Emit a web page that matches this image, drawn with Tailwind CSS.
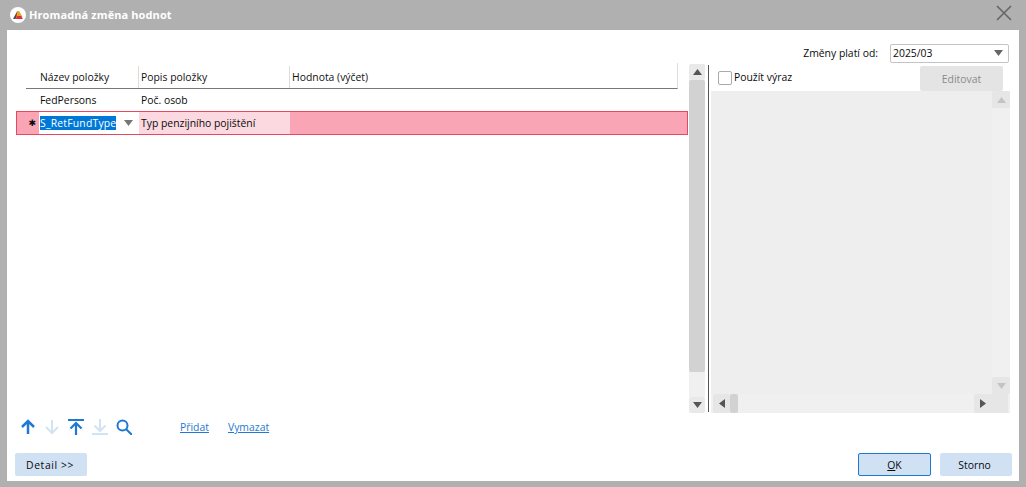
<!DOCTYPE html>
<html><head><meta charset="utf-8"><script src="https://cdn.jsdelivr.net/npm/@tailwindcss/browser@4"></script></head>
<body class="m-0 w-[1026px] h-[487px] overflow-hidden bg-[#b0b0b0] font-['Open_Sans',sans-serif] text-[10.4px] text-[#0a0a0a]">
<div class="h-[30px] flex items-center pl-[10px] pr-[14px] justify-between">
  <div class="flex items-center gap-[3px]">
    <svg width="16" height="16" viewBox="0 0 16 16"><circle cx="8" cy="8" r="8" fill="#fff"/><path d="M3 12 L7 4.500 L9 4.500 L7 9 L5.500 12Z" fill="#4a4a4a"/><path d="M7 4.500 L9.500 4.500 L12.500 10 L6.500 10Z" fill="#f0a020"/><path d="M5.500 12 L7 9 L11 9 L13 12Z" fill="#dd2f3c"/></svg>
    <span class="text-white font-bold text-[11px] tracking-[0.1px]">Hromadná změna hodnot</span>
  </div>
  <svg width="16" height="16" viewBox="0 0 16 16" class="mt-[-4px]"><path d="M1 1 L15 15 M15 1 L1 15" stroke="#666" stroke-width="1.600" fill="none"/></svg>
</div>
<div class="ml-[7px] w-[1012px] h-[451px] bg-white flex flex-col">
  <div class="h-[33px] flex items-center justify-end pr-[10px] pt-[13px] gap-[12px] shrink-0">
    <span class="pt-[2px]">Změny platí od:</span>
    <div class="w-[119px] h-[19px] border border-[#c4c4c4] rounded-[2px] flex items-center justify-between pl-[2px] pr-[5px]">
      <span class="pt-[2px]">2025/03</span>
      <svg width="9" height="6" viewBox="0 0 9 6"><path d="M0 0H9L4.500 6Z" fill="#666"/></svg>
    </div>
  </div>
  <div class="flex h-[350px] shrink-0">
    <div class="w-[701px] flex flex-col shrink-0 pl-[9px] relative">
      <div class="flex flex-1 min-h-0">
        <div class="w-[662px] shrink-0 flex flex-col">
          <div class="ml-[10px] h-[26px] border-b border-[#777] border-r border-r-[#ddd] flex items-end text-[#111]">
            <div class="w-[113px] pl-[14px] pt-[2px] h-[22px] border-r border-[#ddd] flex items-center">Název položky</div>
            <div class="w-[151px] pl-[2px] pt-[2px] h-[22px] border-r border-[#ddd] flex items-center">Popis položky</div>
            <div class="pl-[2px] pt-[2px] h-[22px] flex items-center">Hodnota (výčet)</div>
          </div>
          <div class="ml-[10px] h-[22px] flex items-center pt-[2px]">
            <div class="w-[112px] pl-[14px]">FedPersons</div>
            <div class="pl-[3px]">Poč. osob</div>
          </div>
          <div class="w-[672px] h-[24px] border border-[#e8485f] bg-[#f9a5b5] flex items-stretch shrink-0">
            <div class="w-[22px] flex items-center justify-end pr-[3px] text-[9px] font-['DejaVu_Sans',sans-serif] leading-none">✱</div>
            <div class="w-[100px] bg-white flex items-center justify-between pl-[1px] pr-[6px]">
              <span class="bg-[#0078d7] text-white leading-[13px] tracking-[0.2px] pt-[1px]">S_RetFundType</span>
              <svg width="9" height="6" viewBox="0 0 9 6"><path d="M0 0H9L4.500 6Z" fill="#777"/></svg>
            </div>
            <div class="w-[151px] bg-[#fcd9e0] flex items-center pl-[2px] pt-[2px]">Typ penzijního pojištění</div>
          </div>
        </div>
        <div class="w-[16px] ml-[11px] mt-[1px] flex flex-col shrink-0">
          <div class="h-[16px] bg-[#e9e9e9] rounded-[2px] flex items-center justify-center"><svg width="9" height="6" viewBox="0 0 9 6"><path d="M0 6H9L4.500 0Z" fill="#555"/></svg></div>
          <div class="flex-1 bg-[#f0f0f0]"><div class="h-[292px] bg-[#d2d2d2] rounded-[2px]"></div></div>
          <div class="h-[16px] bg-[#e9e9e9] rounded-[2px] flex items-center justify-center"><svg width="9" height="6" viewBox="0 0 9 6"><path d="M0 0H9L4.500 6Z" fill="#555"/></svg></div>
        </div>
      </div>
    </div>
    <div class="w-[1px] h-[347px] bg-[#555] mt-[2px] shrink-0"></div>
    <div class="flex-1 pl-[2px] pr-[9px] flex flex-col">
      <div class="h-[28px] flex items-start pt-[3px] pl-[7px] justify-between">
        <div class="flex items-center gap-[2px] mt-[4px]"><div class="w-[14px] h-[14px] border border-[#aaa] rounded-[2px]"></div><span>Použít výraz</span></div>
        <div class="w-[83px] h-[25px] bg-[#e4e4e4] rounded-[2px] text-[#8a8a8a] flex items-center justify-center mr-[7px] pt-[2px]">Editovat</div>
      </div>
      <div class="flex-1 bg-[#eeeeee] flex flex-col">
        <div class="flex-1 flex min-h-0">
          <div class="flex-1"></div>
          <div class="w-[18px] bg-[#f0f0f0] flex flex-col">
            <div class="h-[17px] bg-[#e6e6e6] rounded-[2px] flex items-center justify-center"><svg width="9" height="6" viewBox="0 0 9 6"><path d="M0 6H9L4.500 0Z" fill="#c4c4c4"/></svg></div>
            <div class="flex-1"></div>
            <div class="h-[17px] bg-[#e6e6e6] rounded-[2px] flex items-center justify-center"><svg width="9" height="6" viewBox="0 0 9 6"><path d="M0 0H9L4.500 6Z" fill="#c4c4c4"/></svg></div>
          </div>
        </div>
        <div class="h-[19px] bg-[#f0f0f0] flex items-stretch">
          <div class="w-[17px] bg-[#e6e6e6] rounded-[2px] ml-[2px] flex items-center justify-center"><svg width="6" height="9" viewBox="0 0 6 9"><path d="M6 0V9L0 4.500Z" fill="#555"/></svg></div>
          <div class="w-[8px] bg-[#d2d2d2] rounded-[2px]"></div>
          <div class="flex-1"></div>
          <div class="w-[17px] bg-[#e6e6e6] rounded-[2px] flex items-center justify-center"><svg width="6" height="9" viewBox="0 0 6 9"><path d="M0 0V9L6 4.500Z" fill="#555"/></svg></div>
          <div class="w-[17px] bg-[#e6e6e6] mr-[2px]"></div>
        </div>
      </div>
    </div>
  </div>
  <div class="h-[26px] flex items-center pl-[13px] shrink-0 pt-[2px]">
    <div class="flex items-center gap-[8px] w-[160px]">
      <svg width="16" height="16" viewBox="0 0 16 16" fill="none" stroke="#1f78d1" stroke-width="2.500"><path d="M8 15V2M2 8l6-6 6 6"/></svg>
      <svg width="16" height="16" viewBox="0 0 16 16" fill="none" stroke="#d2e3f5" stroke-width="2"><path d="M8 1v13M2 8l6 6 6-6"/></svg>
      <svg width="16" height="16" viewBox="0 0 16 16" fill="none" stroke="#1f78d1" stroke-width="2.200"><path d="M0 1h16M8 16V4M2.500 9.500L8 4l5.500 5.500"/></svg>
      <svg width="16" height="16" viewBox="0 0 16 16" fill="none" stroke="#d2e3f5" stroke-width="2"><path d="M0 15h16M8 0v12M2.500 6.500L8 12l5.500-5.500"/></svg>
      <svg width="16" height="16" viewBox="0 0 16 16" fill="none" stroke="#1f78d1" stroke-width="2"><circle cx="6.500" cy="6.500" r="5"/><path d="M10 10l6 6"/></svg>
    </div>
    <a class="text-[#1f78d1] underline pt-[2px]">Přidat</a>
    <a class="text-[#1f78d1] underline ml-[19px] pt-[2px]">Vymazat</a>
  </div>
  <div class="flex-1 flex items-start justify-between pl-[8px] pr-[7px] pt-[14px]">
    <div class="w-[72px] h-[23px] bg-[#d0e1f4] rounded-[2px] flex items-center pl-[11px] pt-[2px] tracking-[0.6px]">Detail &gt;&gt;</div>
    <div class="flex gap-[9px]">
      <div class="w-[73px] h-[23px] bg-[#d0e1f4] border border-[#1f78d1] rounded-[2px] flex items-center justify-center pt-[2px]"><span><u>O</u>K</span></div>
      <div class="w-[72px] h-[23px] bg-[#d0e1f4] rounded-[2px] flex items-center justify-center pt-[2px] pr-[3px]">Storno</div>
    </div>
  </div>
</div>
</body></html>
